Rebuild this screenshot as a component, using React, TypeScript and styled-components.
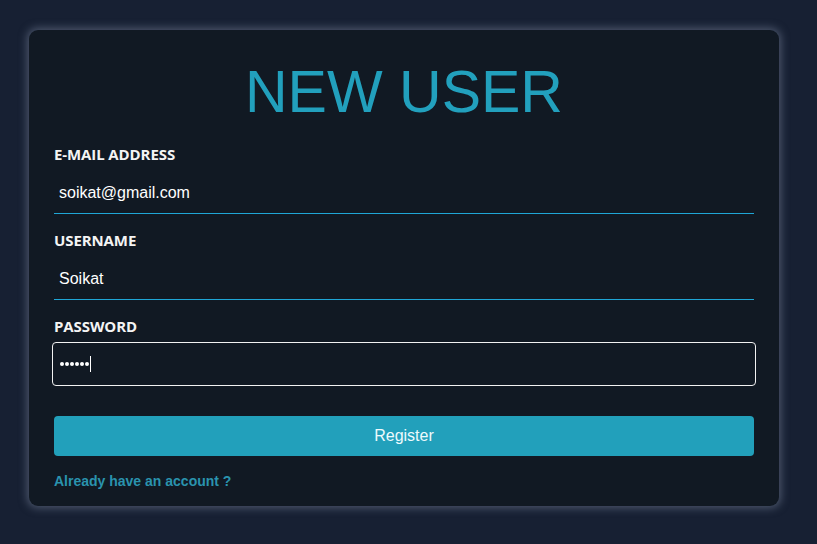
import React from "react";
import styled, { createGlobalStyle } from "styled-components";

const GlobalStyle = createGlobalStyle`
  html, body {
    margin: 0;
    padding: 0;
    background: #172033;
  }
  body {
    font-family: "Liberation Sans", Arial, sans-serif;
  }
`;

const Page = styled.div`
  min-height: 544px;
  padding: 30px 0 0 29px;
  box-sizing: border-box;
`;

const Card = styled.form`
  width: 750px;
  height: 476px;
  box-sizing: border-box;
  padding: 27px 25px 0 25px;
  background: #111923;
  border-radius: 9px;
  box-shadow: 0 0 8px 2px rgba(120, 132, 155, 0.55);
  display: flex;
  flex-direction: column;
`;

const Title = styled.h1`
  margin: 0 0 17px 0;
  font-family: "Liberation Sans", Arial, sans-serif;
  font-weight: 400;
  font-size: 59px;
  line-height: 70px;
  color: #22a0bd;
  text-align: center;
`;

const Field = styled.div`
  display: flex;
  flex-direction: column;
  margin-bottom: 16px;
`;

const Label = styled.label`
  font-family: "Open Sans", "Noto Sans", sans-serif;
  font-weight: 700;
  font-size: 15px;
  line-height: 20px;
  color: #f4f4f4;
  margin-bottom: 6px;
  letter-spacing: -0.1px;
`;

const InputWrap = styled.div`
  border-bottom: 1px solid #1fa6d6;
`;

const TextInput = styled.input`
  display: block;
  width: 100%;
  height: 43px;
  box-sizing: border-box;
  padding: 2px 5px 0 5px;
  margin: 0;
  background: transparent;
  border: none;
  outline: none;
  color: #ffffff;
  font-family: "Liberation Sans", Arial, sans-serif;
  font-size: 16px;
`;

const PasswordBox = styled.div`
  height: 44px;
  box-sizing: border-box;
  margin: 0 -2px;
  padding: 0 7px;
  border: 1px solid #f2f2f2;
  border-radius: 4px;
  display: flex;
  align-items: center;
`;

const Dots = styled.span`
  display: flex;
  gap: 1px;
`;

const Dot = styled.span`
  width: 4px;
  height: 4px;
  border-radius: 50%;
  background: #ffffff;
`;

const Caret = styled.span`
  width: 1px;
  height: 16px;
  background: #ffffff;
  margin-left: 1px;
`;

const Button = styled.button`
  height: 40px;
  margin-top: 14px;
  border: none;
  border-radius: 4px;
  background: #22a0bb;
  color: #eefafd;
  font-family: "Liberation Sans", Arial, sans-serif;
  font-size: 16px;
  cursor: pointer;
`;

const LinkText = styled.a`
  margin-top: 17px;
  font-family: "Liberation Sans", Arial, sans-serif;
  font-weight: 700;
  font-size: 14px;
  line-height: 16px;
  color: #2a93ae;
  text-decoration: none;
  align-self: flex-start;
`;

export default function App() {
  return (
    <>
      <GlobalStyle />
      <Page>
        <Card onSubmit={(e) => e.preventDefault()}>
          <Title>NEW USER</Title>
          <Field>
            <Label>E-MAIL ADDRESS</Label>
            <InputWrap>
              <TextInput type="email" defaultValue="soikat@gmail.com" />
            </InputWrap>
          </Field>
          <Field>
            <Label>USERNAME</Label>
            <InputWrap>
              <TextInput type="text" defaultValue="Soikat" />
            </InputWrap>
          </Field>
          <Field>
            <Label>PASSWORD</Label>
            <PasswordBox>
              <Dots>
                {Array.from({ length: 6 }).map((_, i) => (
                  <Dot key={i} />
                ))}
              </Dots>
              <Caret />
            </PasswordBox>
          </Field>
          <Button type="submit">Register</Button>
          <LinkText href="#">Already have an account ?</LinkText>
        </Card>
      </Page>
    </>
  );
}
